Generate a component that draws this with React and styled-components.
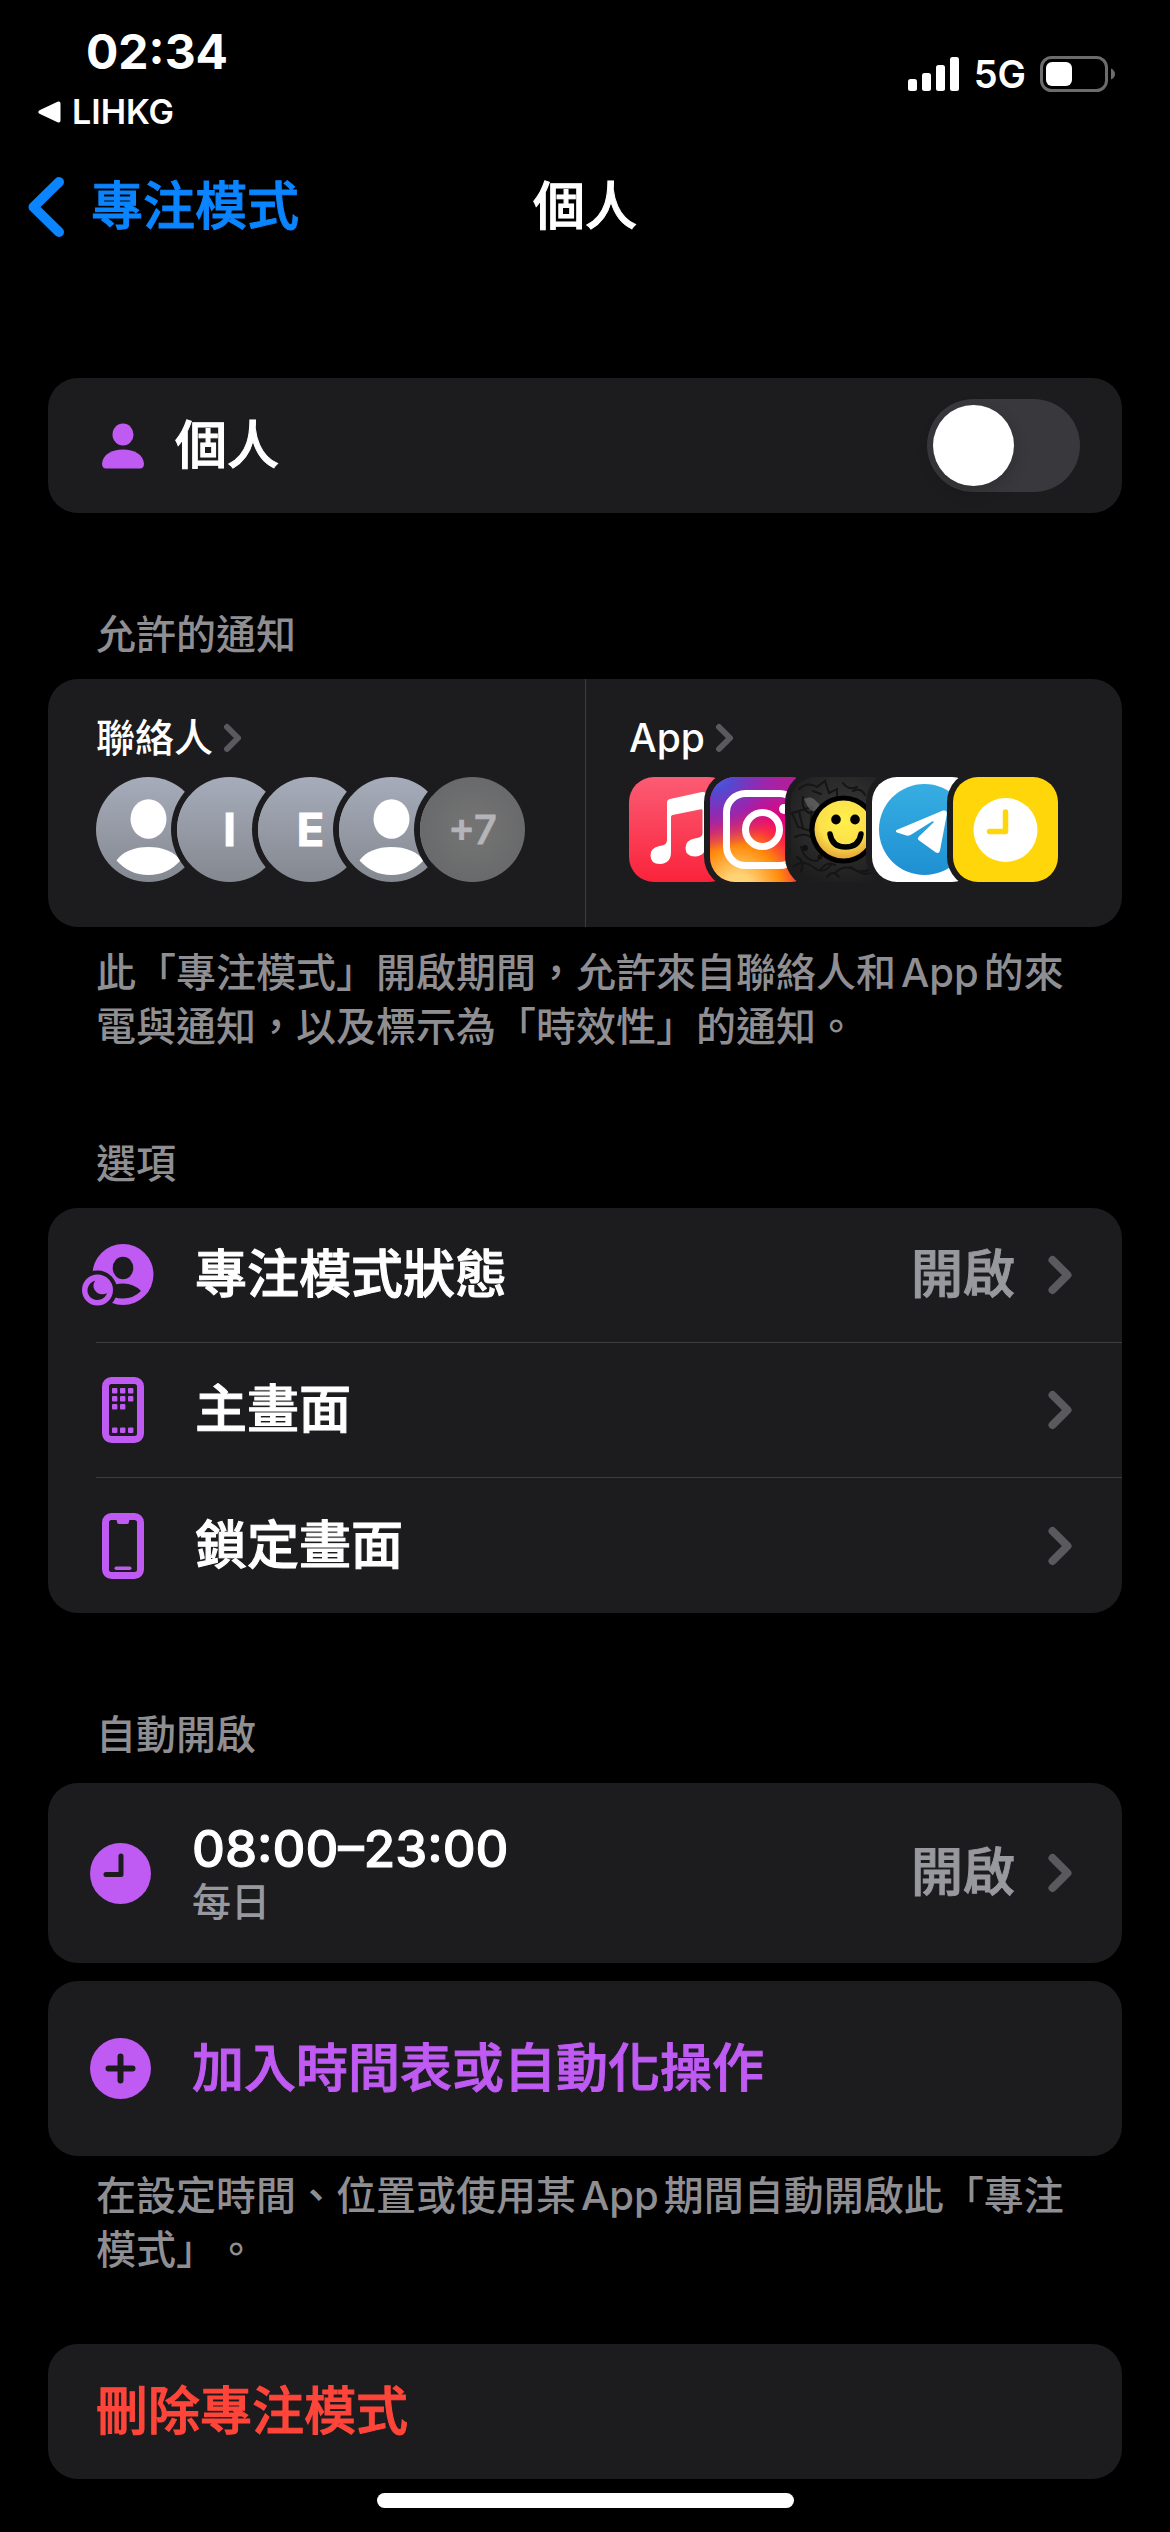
import React, { useState } from 'react';
import styled, { createGlobalStyle } from 'styled-components';

const color = {
  card: '#1c1c1e',
  purple: '#bf5af2',
  blue: '#0a84ff',
  red: '#ff453a',
  grey: '#8e8e93',
  value: '#98989f',
  chevron: '#5a5a5e',
  line: '#3d3d40',
};

const GlobalStyle = createGlobalStyle`
  *, *::before, *::after { box-sizing: border-box; }
  body {
    margin: 0;
    background: #000;
    color: #fff;
    font-family: Inter, "Noto Sans CJK TC", sans-serif;
    font-size: 52px;
    font-weight: 500;
    line-height: 60px;
    text-spacing-trim: space-all;
    text-autospace: normal;
  }
  a { color: inherit; text-decoration: none; }
  button { font: inherit; color: inherit; background: none; border: 0; padding: 0; text-align: left; cursor: pointer; }
  h1, h2, p, ul { margin: 0; padding: 0; font: inherit; }
  ul { list-style: none; }
  svg { display: block; flex: none; }
`;

const Page = styled.div`
  min-height: 100vh;
  display: flex;
  flex-direction: column;
`;

const StatusBar = styled.div`
  display: flex;
  justify-content: space-between;
  padding: 22px 54px 0 38px;
`;

const StatusLeft = styled.div`
  display: flex;
  flex-direction: column;
`;

const Time = styled.time`
  padding-left: 48px;
  font-size: 48px;
  font-weight: 700;
`;

const ReturnLink = styled.a`
  display: flex;
  align-items: center;
  gap: 11px;
  font-size: 34px;
  font-weight: 600;
`;

const StatusRight = styled.div`
  display: flex;
  align-items: center;
  align-self: flex-start;
  gap: 14px;
  padding-top: 22px;
  font-size: 38px;
  font-weight: 600;
`;

const NavBar = styled.header`
  display: grid;
  grid-template-columns: 1fr auto 1fr;
  align-items: center;
  min-height: 130px;
  padding: 0 27px;
  -webkit-text-stroke: 1px;
`;

const BackLink = styled.a`
  display: flex;
  align-items: center;
  gap: 26px;
  color: ${color.blue};
`;

const Title = styled.h1`
  text-align: center;
`;

const Main = styled.main`
  padding: 106px 48px 0;
  -webkit-text-stroke: 1px;
`;

const Card = styled.div`
  overflow: hidden;
  border-radius: 30px;
  background: ${color.card};
`;

const Stack = styled.div`
  display: flex;
  flex-direction: column;
  gap: 18px;
`;

const Section = styled.section`
  padding-top: ${(p) => p.$top}px;
`;

const SectionTitle = styled.h2`
  && {
    padding: 0 48px ${(p) => p.$gap}px;
    color: ${color.grey};
    font-size: 40px;
    line-height: 54px;
    -webkit-text-stroke: 0;
  }
`;

const Footnote = styled.p`
  && {
    padding: ${(p) => p.$gap}px 48px 0;
    color: ${color.grey};
    font-size: 40px;
    line-height: 54px;
    -webkit-text-stroke: 0;
  }
`;

const SwitchRow = styled.label`
  display: flex;
  align-items: center;
  gap: 31px;
  min-height: 135px;
  padding: 0 42px 0 54px;
`;

const RowText = styled.span`
  flex: 1;
  display: flex;
  flex-direction: column;
`;

const Switch = styled.input`
  appearance: none;
  flex: none;
  display: flex;
  align-items: center;
  width: 153px;
  height: 93px;
  margin: 0;
  padding: 6px;
  border-radius: 47px;
  background: ${(p) => (p.checked ? '#30d158' : '#39393d')};
  cursor: pointer;
  &::before {
    content: '';
    width: 81px;
    height: 81px;
    margin-left: ${(p) => (p.checked ? '60px' : '0')};
    border-radius: 50%;
    background: #fff;
    box-shadow: 0 6px 16px rgba(0, 0, 0, 0.18);
  }
`;

const AllowedCard = styled(Card)`
  display: grid;
  grid-template-columns: 1fr 1fr;
`;

const AllowedLink = styled.a`
  display: flex;
  flex-direction: column;
  gap: 12px;
  padding: 32px 42px 45px ${(p) => (p.$divided ? 43 : 48)}px;
  border-left: ${(p) => (p.$divided ? `1px solid ${color.line}` : '0')};
`;

const AllowedHead = styled.span`
  display: flex;
  align-items: center;
  gap: 10px;
  font-size: 39px;
  line-height: 54px;
  -webkit-text-stroke: 0;
`;

const Facepile = styled.span`
  display: flex;
`;

const Tile = styled.span`
  display: flex;
  align-items: center;
  justify-content: center;
  flex: none;
  width: 105px;
  height: 105px;
  overflow: hidden;
  border-radius: ${(p) => (p.$round ? '50%' : '25px')};
  background: ${(p) => p.$fill || 'linear-gradient(#a6acba, #848890)'};
  box-shadow: 0 0 0 6px ${color.card};
  color: ${(p) => p.$ink || '#fff'};
  font-size: ${(p) => p.$size || 45}px;
  font-weight: ${(p) => p.$weight || 700};
  & + & { margin-left: -24px; }
`;

const Item = styled.li`
  display: flex;
  flex-direction: column;
  min-height: 135px;
  &:not(:last-child)::after {
    content: '';
    height: 1px;
    margin-left: 48px;
    background: ${color.line};
  }
`;

const Row = styled.a`
  flex: 1;
  display: flex;
  align-items: center;
  gap: 27px;
  min-height: ${(p) => p.$height || 134}px;
  padding: 0 50px 0 ${(p) => p.$inset || 30}px;
`;

const IconSlot = styled.span`
  display: flex;
  justify-content: center;
  flex: none;
  width: 90px;
`;

const Value = styled.span`
  padding-right: 6px;
  color: ${color.value};
`;

const TimeRange = styled.span`
  font-size: 51px;
  line-height: 58px;
`;

const SubText = styled.span`
  color: ${color.value};
  font-size: 39px;
  line-height: 48px;
  -webkit-text-stroke: 0;
`;

const AddButton = styled.button`
  display: flex;
  align-items: center;
  gap: 27px;
  width: 100%;
  min-height: 175px;
  && { padding: 0 50px 0 27px; color: ${color.purple}; }
`;

const DeleteButton = styled.button`
  width: 100%;
  min-height: 135px;
  && { padding: 0 48px; color: ${color.red}; }
`;

const HomeArea = styled.footer`
  display: flex;
  justify-content: center;
  margin-top: auto;
  padding: 14px 0 24px;
`;

const HomeIndicator = styled.span`
  width: 417px;
  height: 15px;
  border-radius: 8px;
  background: #fff;
`;

const Chevron = ({ small }) =>
  small ? (
    <svg width="20" height="30" viewBox="0 0 20 30" fill="none" stroke={color.chevron} strokeWidth="6" strokeLinecap="round" strokeLinejoin="round">
      <path d="M4 4l11 11L4 26" />
    </svg>
  ) : (
    <svg width="24" height="40" viewBox="0 0 24 40" fill="none" stroke={color.chevron} strokeWidth="8" strokeLinecap="round" strokeLinejoin="round">
      <path d="M4.500 5L19.500 20L4.500 35" />
    </svg>
  );

const BackChevron = () => (
  <svg width="38" height="62" viewBox="0 0 38 62" fill="none" stroke="currentColor" strokeWidth="10" strokeLinecap="round" strokeLinejoin="round">
    <path d="M32 6L6.500 31L32 56" />
  </svg>
);

const ReturnArrow = () => (
  <svg width="23" height="22" viewBox="0 0 23 22" fill="#fff">
    <path d="M1.500 9.200L19.500.7Q22.500-.3 22.500 2.500v17q0 2.800-3 1.800L1.500 12.800q-2.500-1.800 0-3.600z" />
  </svg>
);

const Signal = () => (
  <svg width="52" height="36" viewBox="0 0 52 36" fill="#fff">
    <rect x="0" y="23" width="9" height="12" rx="2.500" />
    <rect x="14" y="17" width="9" height="18" rx="2.500" />
    <rect x="28" y="9" width="9" height="26" rx="2.500" />
    <rect x="42" y="1" width="9" height="34" rx="2.500" />
  </svg>
);

const Battery = () => (
  <svg width="76" height="36" viewBox="0 0 76 36">
    <rect x="1.500" y="1.500" width="65" height="33" rx="10" fill="none" stroke="#6c6c6e" strokeWidth="3" />
    <rect x="6" y="6" width="26" height="24" rx="6" fill="#fff" />
    <path d="M71 12.500q4 2 4 5.500t-4 5.500z" fill="#6c6c6e" />
  </svg>
);

const PersonIcon = () => (
  <svg width="42" height="46" viewBox="0 0 42 46" fill={color.purple}>
    <ellipse cx="21" cy="11.500" rx="10.500" ry="11" />
    <path d="M0 40.500C1 31.500 9.500 26.500 21 26.500S41 31.500 42 40.500Q42 45.500 38 45.500H4Q0 45.500 0 40.500z" />
  </svg>
);

const FocusStatusIcon = () => (
  <svg width="82" height="64" viewBox="0 -1 82 64">
    <circle cx="41" cy="30.500" r="30.500" fill={color.purple} />
    <ellipse cx="41" cy="24" rx="10.300" ry="11.200" fill={color.card} />
    <path d="M28 42Q33 39.500 41 39.500Q52 39.500 59 47Q51.500 54.500 41 54.500Q36 54.500 32 53z" fill={color.card} />
    <circle cx="15.500" cy="46" r="19.600" fill={color.card} />
    <circle cx="15.500" cy="46" r="15.500" fill={color.purple} />
    <path d="M11.500 37.200C6.500 39.500 4.500 45 6 49.500C8 55 13.500 57 18.500 55.500C22 54.500 24 52 25 49.300C20 51.300 15 50 12.700 46C11 43.200 11 40 13 37Q12.500 36.600 11.500 37.200z" fill={color.card} />
  </svg>
);

const HomeScreenIcon = () => (
  <svg width="42" height="66" viewBox="0 0 42 66" fill={color.purple}>
    <rect x="3.500" y="3.500" width="35" height="59" rx="6" fill="none" stroke={color.purple} strokeWidth="7" />
    {[[10, 11], [18, 11], [26, 11], [10, 19], [18, 19], [26, 19], [10, 27], [18, 27], [10, 50.500], [18, 50.500], [26, 50.500]].map(([x, y]) => (
      <rect key={`${x}-${y}`} x={x} y={y} width="5.400" height="5.400" rx="1" />
    ))}
  </svg>
);

const LockScreenIcon = () => (
  <svg width="42" height="66" viewBox="0 0 42 66" fill={color.purple}>
    <rect x="3.500" y="3.500" width="35" height="59" rx="6" fill="none" stroke={color.purple} strokeWidth="7" />
    <path d="M13.500 6q1.500 1 1.500 3t2 2h8q2 0 2-2t1.500-3z" />
    <rect x="12.500" y="53.500" width="17" height="3.400" rx="1.700" />
  </svg>
);

const ClockIcon = () => (
  <svg width="61" height="61" viewBox="0 0 61 61">
    <circle cx="30.500" cy="30.500" r="30.500" fill={color.purple} />
    <path d="M31 13V31.500H16" fill="none" stroke={color.card} strokeWidth="5" strokeLinecap="round" strokeLinejoin="round" />
  </svg>
);

const PlusIcon = () => (
  <svg width="61" height="61" viewBox="0 0 61 61">
    <circle cx="30.500" cy="30.500" r="30.500" fill={color.purple} />
    <path d="M30.500 18.500v24M18.500 30.500h24" stroke={color.card} strokeWidth="6" strokeLinecap="round" />
  </svg>
);

const AvatarArt = () => (
  <svg width="105" height="105" viewBox="0 0 105 105" fill="#fff">
    <ellipse cx="52.500" cy="42" rx="18" ry="19.700" />
    <path d="M20.500 83.500C27 74.500 38 70 52.500 70s25.500 4.500 32 13.500C76 93 65.500 98 52.500 98S29 93 20.500 83.500z" />
  </svg>
);

const MusicArt = () => (
  <svg width="105" height="105" viewBox="0 0 105 105">
    <path fill="#fff" d="M38 25.500q0-3 3-3.600L73 15.100q4-.8 4 3V67q0 12-11 12.500-9.500 0-9.500-8.500 0-8 9-9.500 5.500-.8 7-2.500 1-1.200 1-3.500V33.500q0-1.500-1.500-1.200L43.500 38q-1.500.4-1.500 2V75q0 11.500-11 12-9.500 0-9.500-8.500 0-8 9-9.500 4.500-.6 6-2 1.500-1.500 1.500-4z" />
  </svg>
);

const InstagramArt = () => (
  <svg width="105" height="105" viewBox="0 0 105 105">
    <defs>
      <radialGradient id="igWarm" cx="28" cy="112" r="104" gradientUnits="userSpaceOnUse">
        <stop offset="0" stopColor="#ffdd80" />
        <stop offset=".15" stopColor="#ffd070" />
        <stop offset=".42" stopColor="#ff8a0a" />
        <stop offset=".62" stopColor="#fb2a45" />
        <stop offset=".78" stopColor="#e5007d" />
        <stop offset="1" stopColor="#b0209c" />
      </radialGradient>
      <radialGradient id="igCool" cx="4" cy="-4" r="78" gradientUnits="userSpaceOnUse">
        <stop offset="0" stopColor="#3a6ae6" />
        <stop offset=".25" stopColor="#5548d0" />
        <stop offset=".6" stopColor="#8a2cb8" stopOpacity=".8" />
        <stop offset="1" stopColor="#b31aa0" stopOpacity="0" />
      </radialGradient>
    </defs>
    <rect width="105" height="105" fill="url(#igWarm)" />
    <rect width="105" height="105" fill="url(#igCool)" />
    <g fill="none" stroke="#fff" strokeWidth="7">
      <rect x="16.500" y="16.500" width="72" height="72" rx="19" />
      <circle cx="52.500" cy="52.500" r="17" />
    </g>
    <circle cx="74" cy="32" r="5" fill="#fff" />
  </svg>
);

const SmileArt = () => (
  <svg width="105" height="105" viewBox="0 0 105 105">
    <defs>
      <radialGradient id="smile" cx=".5" cy=".35" r=".7">
        <stop offset="0" stopColor="#fff04a" />
        <stop offset=".6" stopColor="#fbe04a" />
        <stop offset="1" stopColor="#e09a35" />
      </radialGradient>
      <radialGradient id="shade" cx=".5" cy=".4" r=".7">
        <stop offset="0" stopColor="#3c3c3c" />
        <stop offset="1" stopColor="#1a1a1a" />
      </radialGradient>
    </defs>
    <rect width="105" height="105" fill="url(#shade)" />
    <g fill="none" stroke="#151515" strokeWidth="2" strokeLinecap="round">
      <path d="M8 12q9-8 18-2l8-6 4 12 8-4v10M12 20q-2 12 6 16 8-2 12-8M22 14l8 3M1 36l20-6-2 24-12-4zM8 34l4 18M4 60q12-6 20 4M10 70q4 14 16 14 6-6 4-12M2 90q10-8 20 0t18-2M44 96q10-10 22-2t22-6M52 6q6 8 14 4M62 14q8-4 12 4M30 92q6-8 14-4M60 90q8 8 20 2" />
      <path d="M6 80q8 4 4 14M36 100q6-8 12 0" />
    </g>
    <path d="M13 22q7-4 12 2l4 4-2 6q-6 2-10-4z" fill="#777" opacity=".6" />
    <circle cx="14" cy="71" r="3" fill="#111" />
    <circle cx="29" cy="80" r="2.500" fill="#111" />
    <circle cx="52.500" cy="52.500" r="34" fill="#000" />
    <circle cx="52.500" cy="52.500" r="29" fill="url(#smile)" />
    <ellipse cx="45" cy="42.500" rx="4.800" ry="5" />
    <ellipse cx="64" cy="42.500" rx="4.800" ry="5" />
    <path d="M39 57Q41 70 54.500 70T70 57" fill="none" stroke="#000" strokeWidth="5.500" strokeLinecap="round" />
  </svg>
);

const TelegramArt = () => (
  <svg width="105" height="105" viewBox="0 0 105 105">
    <defs>
      <linearGradient id="tg" x1="0" y1="0" x2="0" y2="1">
        <stop offset="0" stopColor="#37aee2" />
        <stop offset="1" stopColor="#1e90d3" />
      </linearGradient>
    </defs>
    <circle cx="52.500" cy="52.500" r="45.500" fill="url(#tg)" />
    <path fill="#fff" d="M24.500 53L71 33.600q4.500-1 3.800 4L68 73.500q-1 4-4.500 1.800L46.500 63q-1.500-1.500.2-3.300L61.500 45.500q.8-2-1.500-1L38.500 58q-2.500 1.200-5 .3l-8.500-2.800q-2-1-.5-2.500z" />
  </svg>
);

const ClockAppArt = () => (
  <svg width="105" height="105" viewBox="0 0 105 105">
    <circle cx="52.500" cy="53" r="32" fill="#fff" />
    <path d="M52.500 35V54.500H36.500" fill="none" stroke="#ffd60a" strokeWidth="5.500" strokeLinecap="round" strokeLinejoin="round" />
  </svg>
);

const options = [
  { name: '專注模式狀態', value: '開啟', Icon: FocusStatusIcon },
  { name: '主畫面', Icon: HomeScreenIcon },
  { name: '鎖定畫面', Icon: LockScreenIcon },
];

export default function App() {
  const [on, setOn] = useState(false);
  return (
    <Page lang="zh-Hant">
      <GlobalStyle />
      <StatusBar>
        <StatusLeft>
          <Time>02:34</Time>
          <ReturnLink href="#lihkg"><ReturnArrow />LIHKG</ReturnLink>
        </StatusLeft>
        <StatusRight>
          <Signal />
          <span>5G</span>
          <Battery />
        </StatusRight>
      </StatusBar>
      <NavBar>
        <BackLink href="#focus"><BackChevron />專注模式</BackLink>
        <Title>個人</Title>
      </NavBar>
      <Main>
        <Card>
          <SwitchRow>
            <PersonIcon />
            <RowText>個人</RowText>
            <Switch type="checkbox" role="switch" checked={on} onChange={(e) => setOn(e.target.checked)} />
          </SwitchRow>
        </Card>

        <Section $top={95}>
          <SectionTitle $gap={17}>允許的通知</SectionTitle>
          <AllowedCard>
            <AllowedLink href="#people">
              <AllowedHead>聯絡人<Chevron small /></AllowedHead>
              <Facepile>
                <Tile $round><AvatarArt /></Tile>
                <Tile $round>I</Tile>
                <Tile $round>E</Tile>
                <Tile $round><AvatarArt /></Tile>
                <Tile $round $fill="radial-gradient(#757575, #646567)" $ink="#b4b4b9" $size={40} $weight={500}>+7</Tile>
              </Facepile>
            </AllowedLink>
            <AllowedLink href="#apps" $divided>
              <AllowedHead>App<Chevron small /></AllowedHead>
              <Facepile>
                <Tile $fill="linear-gradient(#fb5c74, #fa233b)"><MusicArt /></Tile>
                <Tile $fill="#e5007d"><InstagramArt /></Tile>
                <Tile $fill="#222"><SmileArt /></Tile>
                <Tile $fill="#fff"><TelegramArt /></Tile>
                <Tile $fill="#ffd60a"><ClockAppArt /></Tile>
              </Facepile>
            </AllowedLink>
          </AllowedCard>
          <Footnote $gap={19}>此「專注模式」開啟期間，允許來自聯絡人和App的來電與通知，以及標示為「時效性」的通知。</Footnote>
        </Section>

        <Section $top={83}>
          <SectionTitle $gap={17}>選項</SectionTitle>
          <Card as="ul">
            {options.map(({ name, value, Icon }) => (
              <Item key={name}>
                <Row href="#option">
                  <IconSlot><Icon /></IconSlot>
                  <RowText>{name}</RowText>
                  {value && <Value>{value}</Value>}
                  <Chevron />
                </Row>
              </Item>
            ))}
          </Card>
        </Section>

        <Section $top={95}>
          <SectionTitle $gap={21}>自動開啟</SectionTitle>
          <Stack>
            <Card>
              <Row href="#schedule" $height={180} $inset={27}>
                <IconSlot><ClockIcon /></IconSlot>
                <RowText>
                  <TimeRange>08:00–23:00</TimeRange>
                  <SubText>每日</SubText>
                </RowText>
                <Value>開啟</Value>
                <Chevron />
              </Row>
            </Card>
            <Card>
              <AddButton type="button">
                <IconSlot><PlusIcon /></IconSlot>
                加入時間表或自動化操作
              </AddButton>
            </Card>
          </Stack>
          <Footnote $gap={13}>在設定時間、位置或使用某App期間自動開啟此「專注模式」。</Footnote>
        </Section>

        <Section $top={67}>
          <Card>
            <DeleteButton type="button">刪除專注模式</DeleteButton>
          </Card>
        </Section>
      </Main>
      <HomeArea><HomeIndicator /></HomeArea>
    </Page>
  );
}
